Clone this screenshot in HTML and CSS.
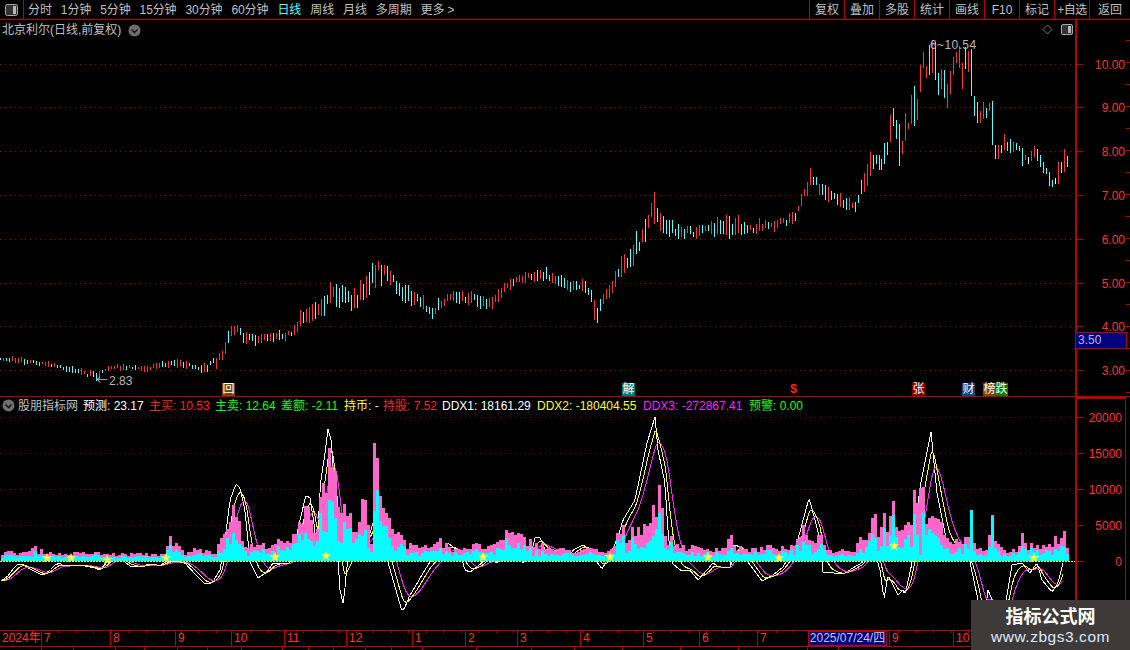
FILE: index.html
```html
<!DOCTYPE html>
<html lang="zh-CN">
<head>
<meta charset="utf-8">
<title>北京利尔 日线</title>
<link rel="stylesheet" href="styles.css">
</head>
<body>
<div class="app">
  <header class="toolbar">
    <button class="layout-btn" aria-label="布局">
      <svg width="13" height="12" viewBox="0 0 13 12"><rect x="0.5" y="0.5" width="12" height="11" rx="2" fill="#333" stroke="#a8a8a8"/><rect x="8" y="2" width="3" height="8" fill="#b8b8b8"/></svg>
    </button>
    <nav class="periods">
      <span>分时</span><span>1分钟</span><span>5分钟</span><span>15分钟</span><span>30分钟</span><span>60分钟</span>
      <span class="on">日线</span><span>周线</span><span>月线</span><span>多周期</span><span>更多 &gt;</span>
    </nav>
    <nav class="actions">
      <span>复权</span><span>叠加</span><span>多股</span><span>统计</span><span>画线</span><span>F10</span><span>标记</span><span class="add">+自选</span><span class="back">返回</span>
    </nav>
  </header>

  <section class="panel panel-main">
    <div class="chart" id="mainChart">
      <div class="heading">
        <span>北京利尔(日线,前复权)</span>
        <svg class="chev" width="13" height="13" viewBox="0 0 13 13"><circle cx="6.5" cy="6.5" r="6" fill="#6e6e6e"/><path d="M3.5 5.5 6.5 8.5 9.5 5.5" fill="none" stroke="#111" stroke-width="1.4"/></svg>
      </div>
      <svg class="tool-icons" width="32" height="12" viewBox="0 0 32 12"><path d="M5.500 1 10 5.500 5.500 10 1 5.500Z" fill="none" stroke="#777"/><rect x="19.500" y="0.500" width="11" height="10" rx="1.500" fill="#333" stroke="#a8a8a8"/><rect x="26" y="2" width="3" height="7" fill="#b8b8b8"/></svg>
      <span class="extreme ext-high">6~10.54</span>
      <span class="extreme ext-low"><span class="arrow">←</span>2.83</span>
    </div>
    <div class="axis" id="mainAxis"><span class="cursor-price">3.50</span></div>
  </section>

  <section class="panel panel-sub">
    <div class="chart" id="subChart">
      <div class="legend">
        <svg class="chev" width="13" height="13" viewBox="0 0 13 13"><circle cx="6.5" cy="6.5" r="6" fill="#6e6e6e"/><path d="M3.5 5.500 6.500 8.500 9.500 5.500" fill="none" stroke="#111" stroke-width="1.4"/></svg>
        <span class="name">股朋指标网</span>
        <span class="white w-a">预测: 23.17</span>
        <span class="red w-a">主买: 10.53</span>
        <span class="green w-a">主卖: 12.64</span>
        <span class="green w-b">差额: -2.11</span>
        <span class="yellow w-c">持币: -</span>
        <span class="red w-d">持股: 7.52</span>
        <span class="white w-e">DDX1: 18161.29</span>
        <span class="yellow w-f">DDX2: -180404.55</span>
        <span class="magenta w-f">DDX3: -272867.41</span>
        <span class="green">预警: 0.00</span>
      </div>
    </div>
    <div class="axis axis-sub" id="subAxis"></div>
  </section>

  <section class="dates" id="dates">
    <span class="date-cursor">2025/07/24/四</span>
  </section>
  <footer class="footer" id="footer"></footer>

  <aside class="watermark">
    <strong>指标公式网</strong>
    <span>www.zbgs3.com</span>
  </aside>
</div>
<script src="chart.js"></script>
</body>
</html>
```
FILE: styles.css
```css
* { box-sizing: border-box; }
html, body { margin: 0; padding: 0; background: #000; }
body {
  width: 1130px;
  height: 650px;
  overflow: hidden;
  font: 12px/14px "Liberation Sans", "Noto Sans CJK SC", sans-serif;
  color: #c0c0c0;
}
.app { position: relative; display: flex; flex-direction: column; width: 1130px; height: 650px; overflow: hidden; }

.toolbar { display: flex; align-items: stretch; height: 20px; border-bottom: 1px solid #bb0000; flex: none; }
.layout-btn {
  width: 24px; padding: 0 0 0 5px; display: flex; align-items: center;
  background: none; border: 0; border-right: 1px solid #bb0000;
}
.periods { display: flex; align-items: center; gap: 9px; padding-left: 4px; flex: 1; white-space: nowrap; letter-spacing: -0.1px; }
.periods .on { color: #55ffff; }
.actions { display: flex; }
.actions span { width: 35px; display: flex; align-items: center; justify-content: center; border-left: 1px solid #bb0000; white-space: nowrap; }
.actions .back { width: 41px; }
.actions .add { letter-spacing: -0.5px; }

.panel { display: flex; flex: none; border-bottom: 1px solid #bb0000; }
.panel-main { height: 377px; }
.panel-sub { height: 234px; }
.chart { position: relative; width: 1075px; flex: none; overflow: hidden; }
.plot { position: absolute; left: 0; top: 0; }
.heading { position: relative; display: flex; align-items: center; gap: 7px; padding: 2px 0 0 2px; height: 18px; z-index: 1; }
.chev { flex: none; }
.tool-icons { position: absolute; left: 1042px; top: 4px; }
.extreme { position: absolute; color: #b8b8b8; z-index: 1; white-space: nowrap; }
.ext-high { left: 930px; top: 18px; letter-spacing: 0.4px; }
.ext-low { left: 96px; top: 353px; }
.arrow { font-family: "Noto Sans CJK SC", sans-serif; display: inline-block; width: 13px; }

.flag { position: absolute; top: 363px; width: 13px; height: 13px; color: #fff; font-size: 12px; line-height: 13px; text-align: center; z-index: 1; }
.flag-hui { background: #7a4410; }
.flag-jie { background: #007c7c; }
.flag-zhang { background: #8a0000; }
.flag-cai { background: #10447c; }
.flag-bang { background: #7a4410; }
.flag-die { background: #007c00; }
.flag-dollar { color: #ff2020; width: 7px; font-weight: bold; }

.axis { position: relative; width: 55px; flex: none; border-left: 2px solid #bb0000; }
.axis-sub { border-top: 2px solid #bb0000; border-right: 1px solid #bb0000; width: 51px; }
.tick-label { position: absolute; right: 5px; color: #ff3232; transform: translateY(-50%); margin-top: 1px; }
.axis-sub .tick-label { right: 3px; margin-top: 1px; }
.tick { position: absolute; left: 0; width: 6px; height: 1px; background: #bb0000; }
.tick-right { left: auto; right: 0; width: 4px; }
.cursor-price {
  position: absolute; left: -2px; top: 312px; width: 52px; height: 17px;
  border: 1px solid #bb0000; background: #00007f; color: #b4b8ff; padding-left: 2px; line-height: 15px; z-index: 1;
}

.legend { position: relative; display: flex; align-items: center; height: 16px; padding: 1px 0 0 2px; white-space: nowrap; z-index: 1; }
.legend .name { width: 68px; padding-left: 3px; }
.white { color: #fff; }
.red { color: #ff2020; }
.green { color: #10ff10; }
.yellow { color: #ffff20; }
.magenta { color: #ff20ff; }
.w-a { width: 66px; }
.w-b { width: 63px; }
.w-c { width: 39px; }
.w-d { width: 59px; }
.w-e { width: 95px; }
.w-f { width: 106px; }

.dates { position: relative; height: 16px; flex: none; border-bottom: 1px solid #bb0000; }
.month { position: absolute; top: 0; height: 15px; padding-left: 2px; border-left: 1px solid #bb0000; color: #ff3232; line-height: 15px; }
.month-first { border-left: 0; }
.date-tick { position: absolute; top: 0; width: 1px; height: 2px; background: #bb0000; }
.date-cursor {
  position: absolute; left: 808px; top: 0; width: 79px; height: 15px; z-index: 1;
  background: #00007f; border: 1px solid #bb0000; color: #c8c8e8; line-height: 13px; text-align: center; white-space: nowrap;
}
.footer { position: relative; height: 3px; flex: none; }
.foot-line { position: absolute; top: 0; width: 1px; height: 3px; background: #bb0000; }

.watermark {
  position: absolute; left: 971px; top: 600px; width: 159px; height: 50px;
  display: flex; flex-direction: column; align-items: center; background: #3e3a3a; z-index: 2;
}
.watermark strong { font: bold 18px/24px "Noto Sans CJK SC", sans-serif; color: #fff; margin-top: 3px; }
.watermark span { font: 15.5px/20px "Liberation Sans", sans-serif; color: #d8ecff; letter-spacing: 0.55px; }
```
FILE: chart.js
```js
(function () {
  var NS = 'http://www.w3.org/2000/svg';
  var seed = 7;
  function rnd() { seed = (seed * 16807) % 2147483647; return seed / 2147483647; }
  function el(tag, attrs, parent) {
    var n = document.createElementNS(NS, tag);
    for (var k in attrs) n.setAttribute(k, attrs[k]);
    parent.appendChild(n);
    return n;
  }
  function div(cls, parent, text) {
    var d = document.createElement('span');
    d.className = cls;
    if (text !== undefined) d.textContent = text;
    parent.appendChild(d);
    return d;
  }
  function interp(pts, x, idx) {
    if (x <= pts[0][0]) return pts[0][idx];
    for (var i = 1; i < pts.length; i++) {
      if (x <= pts[i][0]) {
        var t = (x - pts[i - 1][0]) / (pts[i][0] - pts[i - 1][0]);
        return pts[i - 1][idx] + t * (pts[i][idx] - pts[i - 1][idx]);
      }
    }
    return pts[pts.length - 1][idx];
  }
  function makeSvg(host, top, h) {
    var s = el('svg', { 'class': 'plot', width: 1075, height: h, viewBox: '0 ' + top + ' 1075 ' + h }, host);
    host.insertBefore(s, host.firstChild);
    return s;
  }
  function dotted(svg, y, color) {
    el('line', { x1: 0, x2: 1075, y1: y + 0.5, y2: y + 0.5, stroke: color, 'stroke-dasharray': '1 4' }, svg);
  }

  /* ---------- price panel ---------- */
  var main = makeSvg(document.getElementById('mainChart'), 20, 376);
  var priceY = [[ '10.00', 64 ], [ '9.00', 107 ], [ '8.00', 151 ], [ '7.00', 195 ], [ '6.00', 239 ], [ '5.00', 283 ], [ '4.00', 326 ], [ '3.00', 370 ]];
  priceY.forEach(function (p) { dotted(main, p[1], '#a00000'); });

  var path = [[0,358,2],[30,362,2],[60,367,2],[95,376,3],[110,367,2],[150,368,2],[170,362,3],[205,369,3],[222,356,6],[232,325,7],[245,340,4],[290,334,3],[300,320,6],[320,312,6],[330,292,8],[355,302,7],[365,285,8],[378,268,8],[390,280,7],[410,297,6],[432,310,6],[450,295,4],[490,303,5],[510,284,4],[540,273,4],[570,285,4],[585,286,4],[597,314,9],[605,295,5],[620,272,8],[640,240,8],[655,203,13],[662,226,6],[680,232,5],[700,232,4],[730,225,8],[745,228,5],[770,226,4],[795,218,5],[810,180,6],[830,195,5],[855,207,5],[870,165,9],[882,160,6]];
  var up = '#ff3232', dn = '#55ffff', wh = '#ffffff';
  var prev = 358;
  for (var x = 0; x < 882; x += 3) {
    var mid = interp(path, x, 1), amp = interp(path, x, 2);
    var len = amp * (0.5 + rnd());
    var jitter = (rnd() - 0.5) * amp * 1.2;
    var c = mid + jitter;
    var color = c < prev ? up : dn;
    if (rnd() < 0.2) color = color === up ? dn : up;
    prev = c;
    el('rect', { x: x, y: Math.round(c - len), width: 1, height: Math.max(1, Math.round(len * 2)), fill: color }, main);
  }
  // Candles of the final stretch, read one by one: [top, bottom, colour]
  var tail = [[388,422,dn],[340,402,dn],[336,374,dn],[255,335,up],[235,288,dn],[270,328,dn],[282,408,dn],[333,372,up],[250,333,up],[280,298,up],[195,282,up],[168,288,dn],[207,270,up],[105,186,up],[66,115,up],[108,143,up],[45,135,dn],[30,130,up],[35,150,dn],[130,195,dn],[117,178,up],[120,204,dn],[162,233,up],[122,192,up],[82,137,up],[66,99,up],[48,115,up],[98,177,up],[50,115,dn],[62,126,up],[58,200,dn],[198,257,dn],[216,280,dn],[243,280,up],[216,268,up],[235,264,dn],[220,243,up],[213,345,dn],[345,388,dn],[345,386,up],[345,368,dn],[312,360,up],[336,362,dn],[326,368,dn],[336,366,up],[339,360,dn],[348,362,dn],[354,408,dn],[375,390,up],[381,402,wh],[362,392,up],[348,380,up],[357,392,dn],[375,410,dn],[396,430,dn],[414,432,dn],[427,468,dn],[450,471,dn],[444,462,wh],[396,462,up],[396,428,dn],[357,426,up],[378,410,dn]];
  tail.forEach(function (t, i) {
    var top = 30 + t[0] / 3, bot = 30 + t[1] / 3;
    el('rect', { x: 882 + i * 3 - 1, y: Math.round(top), width: 1, height: Math.round(bot - top), fill: t[2] }, main);
  });

  var mainChart = document.getElementById('mainChart');
  [[222,'flag-hui','回'],[622,'flag-jie','解'],[790,'flag-dollar','$'],[912,'flag-zhang','张'],[962,'flag-cai','财'],[983,'flag-bang','榜'],[995,'flag-die','跌']].forEach(function (f) {
    var s = div('flag ' + f[1], mainChart, f[2]);
    s.style.left = f[0] + 'px';
  });

  var mainAxis = document.getElementById('mainAxis');
  priceY.forEach(function (p) {
    var t = div('tick-label', mainAxis, p[0]);
    t.style.top = (p[1] - 20) + 'px';
    var k = div('tick', mainAxis);
    k.style.top = (p[1] - 20) + 'px';
  });
  for (var ty = 20; ty < 376; ty += 22) {
    var r = div('tick tick-right', mainAxis);
    r.style.top = ty + 'px';
  }

  /* ---------- indicator panel ---------- */
  var sub = makeSvg(document.getElementById('subChart'), 397, 233);
  var subY = [[ '20000', 417 ], [ '15000', 453 ], [ '10000', 489 ], [ '5000', 525 ], [ '0', 561 ]];
  [417, 453, 489, 525].forEach(function (y) { dotted(sub, y, '#7c0000'); });

  var white = [[1,581],[8,576],[14,568],[18,564],[24,565],[30,569],[40,574],[44,575],[50,570],[55,565],[60,563],[64,567],[70,565],[80,565],[95,568],[100,570],[108,561],[112,556],[118,558],[125,562],[130,566],[140,567],[150,564],[160,566],[165,562],[170,561],[185,563],[195,574],[205,584],[212,583],[220,570],[225,540],[230,500],[236,484],[240,488],[245,510],[250,562],[258,578],[267,572],[273,563],[289,563],[295,543],[300,520],[306,495],[310,498],[315,530],[317,560],[320,487],[325,453],[328,429],[332,443],[333,477],[338,560],[340,590],[343,603],[345,590],[347,563],[355,550],[362,540],[370,533],[377,510],[383,540],[388,562],[393,580],[402,611],[405,607],[410,595],[418,582],[423,573],[430,562],[443,553],[448,543],[453,547],[460,553],[465,570],[470,572],[477,567],[487,558],[497,563],[507,553],[513,537],[518,542],[523,563],[530,557],[535,538],[540,537],[545,550],[557,552],[568,562],[573,550],[583,545],[590,550],[597,562],[602,569],[610,555],[618,537],[623,520],[635,500],[647,443],[655,417],[658,450],[665,483],[668,533],[672,563],[680,570],[690,570],[698,580],[707,570],[713,563],[720,568],[730,567],[733,545],[742,547],[748,562],[762,581],[773,575],[783,567],[797,543],[809,498],[815,520],[820,540],[823,572],[833,573],[843,574],[863,562],[870,535],[880,570],[884,599],[888,575],[898,595],[903,590],[905,595],[912,563],[920,487],[931,432],[937,493],[947,543],[958,552],[970,562],[978,600],[983,630],[988,590],[993,602],[998,630],[1005,607],[1012,565],[1022,563],[1030,573],[1037,563],[1042,580],[1052,592],[1058,583],[1063,563]];
  var wLine = [], yLine = [], mLine = [], yv = 581, mv = 581;
  for (var lx = 1; lx <= 1063; lx += 1.5) {
    var wv = interp(white, lx, 1);
    wLine.push(lx + ',' + wv.toFixed(1));
    yv += (wv - yv) * 0.27;
    mv += (yv - mv) * 0.24;
    yLine.push(lx + ',' + yv.toFixed(1));
    mLine.push(lx + ',' + mv.toFixed(1));
  }
  [[wLine, '#ffffff'], [mLine, '#ff20ff'], [yLine, '#ffff20']].forEach(function (l) {
    el('polyline', { points: l[0].join(' '), fill: 'none', stroke: l[1], 'shape-rendering': 'crispEdges' }, sub);
  });

  var pink = [[1,8],[30,9],[33,15],[37,10],[60,7],[95,8],[105,7],[165,7],[168,25],[172,17],[178,15],[183,7],[195,12],[215,8],[222,28],[226,34],[230,56],[236,40],[244,15],[260,15],[270,18],[285,18],[295,25],[303,55],[310,38],[315,22],[318,86],[324,80],[327,113],[333,84],[340,52],[346,45],[355,30],[361,62],[366,43],[370,20],[373,118],[378,78],[382,53],[386,48],[390,33],[400,28],[405,16],[420,15],[438,20],[450,12],[472,15],[495,14],[505,28],[512,26],[520,23],[527,20],[535,18],[550,12],[577,10],[590,12],[600,8],[612,12],[620,36],[625,22],[632,33],[647,38],[653,55],[658,68],[662,37],[667,22],[680,15],[700,12],[715,13],[725,14],[730,29],[735,12],[760,12],[775,15],[785,10],[792,18],[798,18],[802,30],[807,25],[817,24],[822,25],[827,10],[853,12],[860,25],[868,28],[873,47],[877,30],[883,52],[887,30],[892,60],[897,35],[908,35],[913,71],[919,73],[923,60],[927,35],[933,42],[943,30],[950,20],[967,20],[969,51],[972,25],[977,12],[987,12],[990,46],[993,30],[998,20],[1003,10],[1017,10],[1020,28],[1025,14],[1033,16],[1040,13],[1047,14],[1055,22],[1062,30],[1066,17]];
  var spikes = { 33:15, 168:25, 225:32, 231:56, 303:55, 327:113, 360:62, 372:118, 438:23, 472:18, 495:19, 620:36, 647:46, 653:55, 658:68, 730:29, 873:47, 883:52, 891:60, 912:71, 918:73, 969:51, 990:46, 1020:28, 1062:30 };
  var cyanSet = { 33:10, 231:28, 318:48, 327:61, 333:43, 372:50, 378:40, 420:8, 590:14, 658:60, 662:25, 873:23, 891:46, 912:47, 918:6, 969:51, 990:45, 946:30, 1020:15 };
  for (var bx = 0; bx < 1066; bx += 3) {
    var sx = bx + 1;
    var base = interp(pink, sx, 1);
    var h = spikes[bx] || Math.max(3, base * (0.72 + rnd() * 0.5));
    var cy = cyanSet[bx] || Math.max(3, h * (0.35 + rnd() * 0.4));
    if (h < 12) cy = Math.max(cy, h * 0.55);
    if (cy > h) h = cy;
    el('rect', { x: sx, y: Math.round(561 - h), width: 3, height: Math.round(h), fill: '#ff66cc' }, sub);
    el('rect', { x: sx, y: Math.round(561 - cy), width: 3, height: Math.round(cy), fill: '#00ffff' }, sub);
  }
  el('line', { x1: 0, x2: 1075, y1: 561.5, y2: 561.5, stroke: '#ffff20', 'stroke-dasharray': '2 1' }, sub);

  function star(cx, cy) {
    var pts = [];
    for (var i = 0; i < 10; i++) {
      var rad = i % 2 ? 2.2 : 5.2, a = -Math.PI / 2 + i * Math.PI / 5;
      pts.push((cx + rad * Math.cos(a)).toFixed(1) + ',' + (cy + rad * Math.sin(a)).toFixed(1));
    }
    el('polygon', { points: pts.join(' '), fill: '#ffff40' }, sub);
  }
  [[47,558],[71,558],[107,560],[166,558],[275,557],[326,556],[483,557],[610,557],[708,557],[779,558],[894,546],[1034,558]].forEach(function (s) { star(s[0], s[1]); });

  var subAxis = document.getElementById('subAxis');
  subY.forEach(function (p) {
    var t = div('tick-label', subAxis, p[0]);
    t.style.top = (p[1] - 399) + 'px';
    var k = div('tick', subAxis);
    k.style.top = (p[1] - 399) + 'px';
  });

  /* ---------- date axis ---------- */
  var dates = document.getElementById('dates');
  [[0,'2024年'],[41,'7'],[110,'8'],[175,'9'],[231,'10'],[284,'11'],[346,'12'],[412,'1'],[465,'2'],[517,'3'],[580,'4'],[643,'5'],[699,'6'],[757,'7'],[889,'9'],[953,'10']].forEach(function (m, i) {
    var s = div('month' + (i === 0 ? ' month-first' : ''), dates, m[1]);
    s.style.left = m[0] + 'px';
  });
  for (var dx = 58; dx < 1070; dx += 17.500) {
    var d = div('date-tick', dates);
    d.style.left = Math.round(dx) + 'px';
  }
  var footer = document.getElementById('footer');
  [41,73,115,144,177,207,241,282,308,333,365,391,422,476,531,574,622,680,738,807,838].forEach(function (fx) {
    var f = div('foot-line', footer);
    f.style.left = fx + 'px';
  });
})();
```
